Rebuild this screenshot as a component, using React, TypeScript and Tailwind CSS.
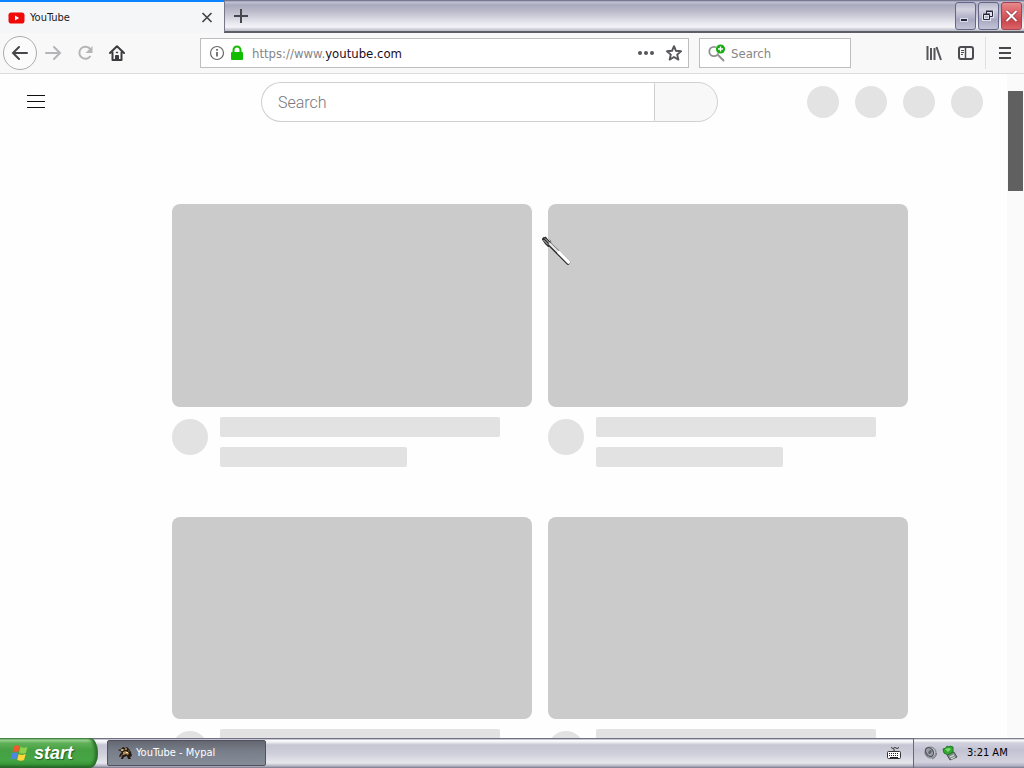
import type { ReactNode } from 'react';

const uiFont = "font-['DejaVu_Sans_Condensed','Noto_Sans',sans-serif]";

function IconButton({ label, className = '', children }: { label: string; className?: string; children: ReactNode }) {
  return (
    <button type="button" aria-label={label} className={`flex shrink-0 items-center justify-center ${className}`}>
      {children}
    </button>
  );
}

function TitleBar() {
  return (
    <div className="flex h-[33px] shrink-0 bg-[linear-gradient(#5f5f7c_0,#c4c4d6_2px,#a9a9bd_5px,#bdbdcd_12px,#e4e4ec_22px,#f4f4f8_27px,#c4c4d0_30px,#c0c0c8_31px,#5c5e66_31px,#5c5e66_100%)]">
      <div className="flex w-56 shrink-0 items-center border-t-2 border-[#0a84ff] bg-[#f5f6f7] pr-2 pl-2">
        <svg width="17" height="12" viewBox="0 0 17 12" aria-hidden="true">
          <rect x="0.5" y="0.5" width="16" height="11" rx="2.8" fill="#f10808" />
          <path d="M7 3.5v5l4.2-2.5z" fill="#fff" />
        </svg>
        <span className="ml-[5px] pt-px text-[11px] text-[#1a1a1e]">YouTube</span>
        <IconButton label="Close tab" className="ml-auto size-4">
          <svg width="16" height="16" viewBox="0 0 16 16" fill="none" stroke="#46464a" strokeWidth="1.7">
            <path d="M2.500 3l9 9M11.500 3l-9 9" />
          </svg>
        </IconButton>
      </div>
      <IconButton label="New tab" className="mb-px w-8 border-l border-[#77778a]">
        <svg width="16" height="16" viewBox="0 0 16 16" fill="none" stroke="#46464c" strokeWidth="2">
          <path d="M8 1v14M1 8h14" />
        </svg>
      </IconButton>
      <div className="ml-auto flex gap-0.5 pt-0.5 pr-0.5 pb-[3px]">
        <IconButton label="Minimize" className="w-[21px] rounded-[3px] border border-[#66668b] bg-[linear-gradient(#b7b7cb,#d3d3e0_25%,#a8a8c2_65%,#c4c4d6)]">
          <svg width="19" height="26" viewBox="0 0 19 26">
            <path d="M4 15h8v4H4z" fill="#dcdce8" />
            <path d="M5 16h6v2H5z" fill="#25253c" />
          </svg>
        </IconButton>
        <IconButton label="Restore" className="w-[21px] rounded-[3px] border border-[#66668b] bg-[linear-gradient(#b7b7cb,#d3d3e0_25%,#a8a8c2_65%,#c4c4d6)]">
          <svg width="19" height="26" viewBox="0 0 19 26" fill="none">
            <path d="M7.500 8.500h6v5h-2M4.500 11.500h6v5h-6z" stroke="#e2e2ec" strokeWidth="3" />
            <path d="M7.500 11V8.500h6v5h-3M4.500 11.500h6v5h-6z" stroke="#25253c" />
            <path d="M7 8h7M4 11h7" stroke="#25253c" />
          </svg>
        </IconButton>
        <IconButton label="Close" className="w-[21px] rounded-[3px] border border-[#a04352] bg-[linear-gradient(#e48a8c,#df686b_30%,#c9484e_70%,#dc6468)]">
          <svg width="19" height="26" viewBox="0 0 19 26" fill="none">
            <path d="M4.500 8l10 10M14.500 8l-10 10" stroke="#8f3644" strokeWidth="3.200" />
            <path d="M4.500 8l10 10M14.500 8l-10 10" stroke="#fff" strokeWidth="2" />
          </svg>
        </IconButton>
      </div>
    </div>
  );
}

function Toolbar() {
  return (
    <div className="flex h-[41px] shrink-0 items-center border-b border-[#dcdcdc] bg-[#f8f8f8] pr-[11px] pl-[3px]">
      <IconButton label="Back" className="size-[34px] rounded-full border border-[#acacac] bg-[#fbfbfb]">
        <svg width="18" height="16" viewBox="0 0 18 16" fill="none" stroke="#46464a" strokeWidth="2" strokeLinecap="round">
          <path d="M8 2L2 8l6 6M2 8h14" />
        </svg>
      </IconButton>
      <IconButton label="Forward" className="w-8">
        <svg width="18" height="16" viewBox="0 0 18 16" fill="none" stroke="#b5b5b7" strokeWidth="2" strokeLinecap="round">
          <path d="M10 2l6 6-6 6M16 8H2" />
        </svg>
      </IconButton>
      <IconButton label="Reload" className="w-8">
        <svg width="16" height="16" viewBox="0 0 16 16" fill="none" stroke="#b5b5b7" strokeWidth="2">
          <path d="M13.200 4.200A6 6 0 1 0 13.400 11" />
          <path d="M15.500 1v7h-7z" fill="#b5b5b7" stroke="none" />
        </svg>
      </IconButton>
      <IconButton label="Home" className="w-8">
        <svg width="16" height="16" viewBox="0 0 16 16" fill="none" stroke="#3c3c40" strokeWidth="2" strokeLinecap="round" strokeLinejoin="round">
          <path d="M1 8l7-6.700L15 8M3.500 7.500V15h9V7.500" />
          <path d="M6.500 15v-4.500h3V15" fill="#3c3c40" strokeWidth="1" />
          <path d="M7.500 7.500h1" strokeWidth="1.500" />
        </svg>
      </IconButton>
      <div className="ml-[67px] flex h-[30px] min-w-0 flex-1 items-center border border-[#bebec2] bg-white pr-[6px] pl-2">
        <svg width="16" height="16" viewBox="0 0 16 16" fill="none" stroke="#68686b" className="shrink-0" aria-hidden="true">
          <circle cx="8" cy="8" r="6.500" strokeWidth="1.200" />
          <path d="M8 7v4.500M8 4v1.800" strokeWidth="1.800" />
        </svg>
        <svg width="14" height="16" viewBox="0 0 14 16" className="ml-[5px] shrink-0" aria-hidden="true">
          <path d="M3.500 7V5a3.500 3.500 0 0 1 7 0v2" fill="none" stroke="#12bc00" strokeWidth="2" />
          <rect x="1" y="7" width="12" height="8" rx="1" fill="#12bc00" />
        </svg>
        <a href="https://www.youtube.com" className="ml-2 truncate pt-px text-[13px] text-[#1a0d25]">
          <span className="text-[#85858a]">https://www.</span>youtube.com
        </a>
        <IconButton label="Page actions" className="ml-auto w-5">
          <svg width="18" height="6" viewBox="0 0 18 6" fill="#55555a">
            <circle cx="3" cy="3" r="2" />
            <circle cx="9" cy="3" r="2" />
            <circle cx="15" cy="3" r="2" />
          </svg>
        </IconButton>
        <IconButton label="Bookmark this page" className="ml-[10px] w-4">
          <svg width="16" height="16" viewBox="0 0 16 16" fill="none" stroke="#55555a" strokeWidth="1.900" strokeLinejoin="round">
            <path d="M8 1.200l2 4.600 5 .5-3.800 3.300 1.200 5L8 12l-4.400 2.600 1.200-5L1 6.300l5-.5z" />
          </svg>
        </IconButton>
      </div>
      <div className="ml-[10px] flex h-[30px] w-[152px] shrink-0 items-center border border-[#bebec2] bg-white pl-2">
        <svg width="18" height="18" viewBox="0 0 18 18" fill="none" aria-hidden="true">
          <circle cx="6" cy="7.500" r="4.700" stroke="#909092" strokeWidth="1.800" />
          <path d="M10 11l6 6" stroke="#909092" strokeWidth="2" />
          <circle cx="12.500" cy="5" r="5" fill="#fff" />
          <circle cx="12.500" cy="5" r="4.600" fill="#16ad10" />
          <path d="M12.500 2.500v5M10 5h5" stroke="#fff" strokeWidth="1.300" />
        </svg>
        <input
          type="search"
          aria-label="Search the web"
          placeholder="Search"
          className="ml-[5px] h-7 min-w-0 flex-1 bg-transparent pt-px text-[13px] outline-none placeholder:text-[#85858a]"
        />
      </div>
      <IconButton label="Library" className="ml-[67px] w-8">
        <svg width="16" height="16" viewBox="0 0 16 16" fill="none" stroke="#55555a">
          <path d="M1.500 1v14M5 3v12M8.500 3v12M10.500 2l4.500 13" strokeWidth="2" />
        </svg>
      </IconButton>
      <IconButton label="Sidebars" className="w-8">
        <svg width="16" height="16" viewBox="0 0 16 16" fill="none" stroke="#4b4b50">
          <rect x="1" y="2" width="14" height="12" rx="2" strokeWidth="2" />
          <path d="M7.500 2v12" strokeWidth="1.500" />
          <path d="M3 5.500h3M3 7.500h3M3 9.500h2" />
        </svg>
      </IconButton>
      <div className="ml-[3px] h-8 border-l border-[#e0e0e0]" />
      <IconButton label="Open menu" className="ml-[11px] w-4">
        <svg width="16" height="16" viewBox="0 0 16 16" stroke="#48484c" strokeWidth="2">
          <path d="M2 3h12M2 8h12M2 13h12" />
        </svg>
      </IconButton>
    </div>
  );
}

function PlaceholderCard() {
  return (
    <article className="pb-[50px]">
      <div className="aspect-video rounded-lg bg-[#cbcbcb]" />
      <div className="flex gap-3 pt-[10px]">
        <div className="mt-0.5 size-9 shrink-0 rounded-full bg-[#e2e2e2]" />
        <div className="flex flex-1 flex-col gap-[10px]">
          <div className="h-5 max-w-70 rounded-[2px] bg-[#e2e2e2]" />
          <div className="h-5 w-3/5 rounded-[2px] bg-[#e2e2e2]" />
        </div>
      </div>
    </article>
  );
}

function Page() {
  return (
    <div className="flex min-h-0 flex-1 bg-[#fefefe]">
      <div className="min-w-0 flex-1 overflow-hidden">
        <header className="flex h-14 items-center px-6">
          <div className="flex w-[148px] shrink-0">
            <IconButton label="Guide" className="size-6">
              <svg width="24" height="24" viewBox="0 0 24 24" stroke="#0f0f0f">
                <path d="M3 5.500h18M3 11.500h18M3 17.500h18" />
              </svg>
            </IconButton>
          </div>
          <form className="mx-auto flex h-10 w-[457px] font-[Roboto,sans-serif]">
            <input
              type="search"
              aria-label="Search videos"
              placeholder="Search"
              className="min-w-0 flex-1 rounded-l-full border border-r-0 border-[#cfcfcf] bg-white pt-0.5 pl-4 text-base font-light outline-none placeholder:text-[#77777a]"
            />
            <button type="button" aria-label="Submit search" className="w-16 rounded-r-full border border-[#d0d0d0] bg-[#f8f8f8]" />
          </form>
          <div className="flex gap-4">
            <div className="size-8 rounded-full bg-[#e3e3e3]" />
            <div className="size-8 rounded-full bg-[#e3e3e3]" />
            <div className="size-8 rounded-full bg-[#e3e3e3]" />
            <div className="size-8 rounded-full bg-[#e3e3e3]" />
          </div>
        </header>
        <main className="pt-[74px] pl-[73px]">
          <div className="mx-auto grid max-w-[736px] grid-cols-2 gap-x-4">
            <PlaceholderCard />
            <PlaceholderCard />
            <PlaceholderCard />
            <PlaceholderCard />
          </div>
        </main>
      </div>
      <div className="w-[17px] shrink-0 bg-[#fafafa] pt-[17px] pr-px pl-px">
        <div className="h-[100px] bg-[#606060]" />
      </div>
    </div>
  );
}

function Taskbar() {
  return (
    <footer className="flex h-[30px] shrink-0 items-stretch bg-[linear-gradient(#55556c_0,#8c8c9f_1px,#fff_2px,#f0f0f5_4px,#c5c5d3_7px,#d0d0dc_16px,#e7e7ed_25px,#b4b4c2_28px,#77778a_100%)]">
      <button
        type="button"
        className="flex w-[98px] items-center gap-1 rounded-r-[8px_15px] bg-[linear-gradient(#3e7c3c_0,#a0d898_2px,#60b058_5px,#46a043_12px,#45a544_22px,#3b9838_26px,#205e24_100%)] pl-[10px] shadow-[inset_-3px_0_3px_#2c6f2c]"
      >
        <svg width="20" height="20" viewBox="0 0 20 20" aria-hidden="true">
          <path d="M4 3.200c2-1.400 4-1.200 5.700 0L8.200 9.300c-2-1.200-3.900-1.100-5.800 0z" fill="#ef592c" />
          <path d="M10.500 3.800c2.300 1.200 4.400 1.200 7 .1L15.900 10c-2.400 1-4.500.9-6.900-.2z" fill="#8bd34a" />
          <path d="M2.100 10.200c2-1.100 4-1 5.800.1l-1.600 6.200c-1.800-1.100-3.700-1.100-5.800 0z" fill="#4d87e4" />
          <path d="M8.700 11c2.300 1.200 4.600 1.200 7 .1L14.100 17c-2.500 1.100-4.700.9-6.900-.2z" fill="#ffd538" />
        </svg>
        <span className="font-['Liberation_Sans',Arial,sans-serif] text-[18px] leading-5 font-bold text-white italic [text-shadow:1px_1px_1px_#235b23]">start</span>
      </button>
      <button type="button" className="my-0.5 ml-[9px] flex w-[159px] items-center gap-[3px] rounded-[2px] border border-[#50535f] bg-[linear-gradient(#646771,#777d89_40%,#858b97)] pl-[9px] text-[11px] whitespace-nowrap text-white">
        <svg width="16" height="16" viewBox="0 0 16 16" className="shrink-0" aria-hidden="true">
          <path d="M1 5l3-1 2-2 2 1 2-1 2 2 2 3 1 4-2 1 1 2h-3l-1-3-3 1-1 2H4l1-3-3 1 1-3 2-2-2-1z" fill="#251b13" />
          <path d="M3 5l3-1 2 1-3 1zM6 7l3-1 3 2-1 2-2-1-3 1zM4 10l2-1-1 2zM11 5l2 2-2-1z" fill="#b88f58" />
          <path d="M4 4.500h2v1H4zM8 3.500h2v1H8zM9 7h2v1H9z" fill="#f6e1b2" />
        </svg>
        <span className="pt-px">YouTube - Mypal</span>
      </button>
      <button type="button" aria-label="On-screen keyboard" className="mr-3 ml-auto flex items-center">
        <svg width="14" height="16" viewBox="0 0 14 16">
          <path d="M4 2.500l2 1 2-1 2 1 2-1M7 4v3" fill="none" stroke="#333" />
          <rect x="0.500" y="6.500" width="13" height="7" rx="1" fill="#fff" stroke="#333" />
          <path d="M2 8.500h10M2 10.500h10" stroke="#222" strokeDasharray="1 1" />
          <path d="M3 12.500h8" stroke="#222" />
        </svg>
      </button>
      <div className="flex w-[111px] items-center border-l border-[#67677b] bg-[linear-gradient(#55556c_0,#fff_2px,#d0d0df_5px,#c2c2d2_12px,#d3d3df_24px,#b0b0c3_28px,#77778a_100%)] pl-2">
        <svg width="16" height="16" viewBox="0 0 16 16" className="shrink-0" aria-label="Volume">
          <circle cx="8.500" cy="7.500" r="5.500" fill="#bfc2c9" stroke="#7a7d85" />
          <ellipse cx="7.500" cy="7" rx="3.600" ry="4.800" transform="rotate(-35 7.500 7)" fill="#9b9ea6" stroke="#4e5159" strokeWidth="1.200" />
          <ellipse cx="8" cy="7" rx="1.500" ry="2.200" transform="rotate(35 8 7)" fill="#62656c" />
          <path d="M10 14c3-1 4.500-3 4.500-6" fill="none" stroke="#75787f" />
        </svg>
        <svg width="16" height="16" viewBox="0 0 16 16" className="ml-1 shrink-0" aria-label="Safely remove hardware">
          <path d="M5 10l7-3 3 5-7 3z" fill="#848b8c" stroke="#4b5654" />
          <path d="M8 12l4-2M9 14l4-2" stroke="#e8eeec" />
          <path d="M1 4l3-1 1-2 2 1 1-1 3 1v5L6 10 2 8z" fill="#35a636" stroke="#237929" />
          <path d="M3 4l4-1 2 1-3 3z" fill="#76df65" />
        </svg>
        <time className="ml-[9px] pt-px text-[11px] whitespace-nowrap text-black">3:21 AM</time>
      </div>
    </footer>
  );
}

function ForkCursor() {
  return (
    <svg width="30" height="32" viewBox="0 0 30 32" className="pointer-events-none absolute top-[235px] left-[541px]" aria-hidden="true">
      <path d="M3 4l7 7 17 17" fill="none" stroke="#262626" strokeWidth="3.600" strokeLinecap="round" />
      <path d="M1 4.500L4.500 1.500 10 6l.5 5L7 12 4 9z" fill="#303030" />
      <path d="M9 8.500L28 27" fill="none" stroke="#808080" strokeWidth="3" strokeLinecap="round" />
      <path d="M9 9L27.500 27.500" fill="none" stroke="#e8e8e8" strokeWidth="2.200" strokeLinecap="round" />
      <path d="M18 17.500l9.500 9.500" fill="none" stroke="#fff" strokeWidth="3.200" strokeLinecap="round" />
      <path d="M2.500 5L7 9.500M4 3.500l4.500 4.500M5.500 2.500L9.500 6.500" fill="none" stroke="#dedede" strokeWidth="0.900" />
    </svg>
  );
}

export default function App() {
  return (
    <div className={`relative flex h-screen flex-col overflow-hidden ${uiFont}`}>
      <TitleBar />
      <Toolbar />
      <Page />
      <Taskbar />
      <ForkCursor />
    </div>
  );
}
